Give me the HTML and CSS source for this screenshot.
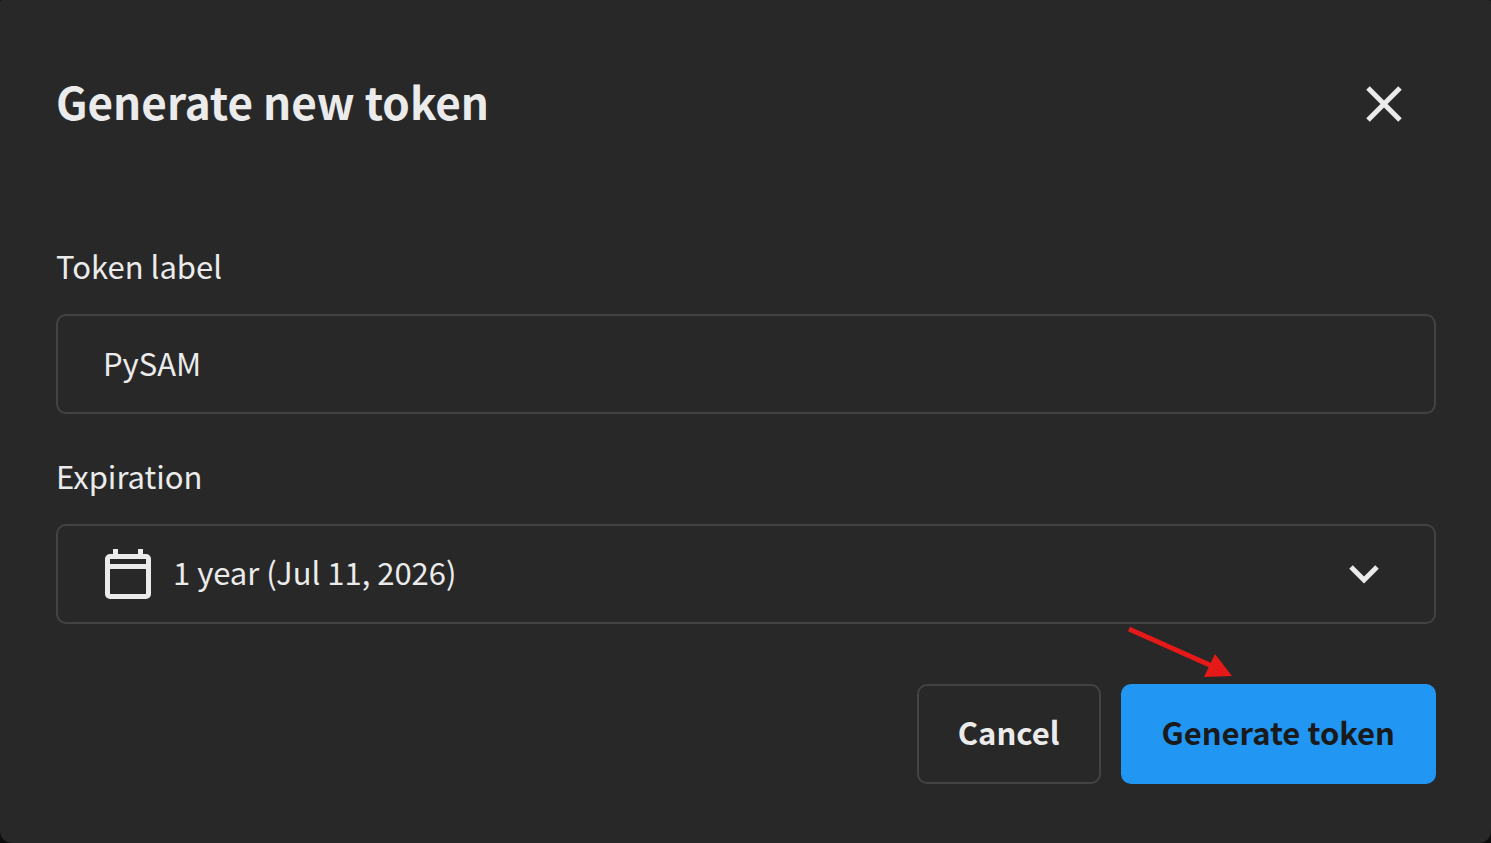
FILE: index.html
```
<!DOCTYPE html>
<html lang="en">
  <head>
    <meta charset="UTF-8">
    <title>Generate new token</title>
    <link rel="stylesheet" href="styles.css">
  </head>
  <body>
  <form class="dialog" role="dialog" aria-labelledby="dialogTitle">
    <div class="header">
      <h1 id="dialogTitle">Generate new token</h1>
      <button type="button" class="close" aria-label="Close">
        <svg width="36" height="36" viewBox="0 0 36 36"><path d="M2 2L34 34M34 2L2 34"/></svg>
      </button>
    </div>

    <label for="tokenLabel">Token label</label>
    <input type="text" id="tokenLabel" class="field" value="PySAM">

    <label for="expiration">Expiration</label>
    <div class="select">
      <select id="expiration" class="field">
        <option>1 year (Jul 11, 2026)</option>
      </select>
      <svg class="calendar" width="46" height="50" viewBox="0 0 46 50">
        <path fill-rule="evenodd" d="M8 0h5v5h20V0h5v5h3a5 5 0 0 1 5 5v35a5 5 0 0 1-5 5H5a5 5 0 0 1-5-5V10a5 5 0 0 1 5-5h3zM5 10v5h36v-5zM5 20v25h36V20z"/>
      </svg>
      <svg class="chevron" width="30" height="20" viewBox="0 0 30 20"><path d="M2 3L15 16L28 3"/></svg>
    </div>

    <div class="buttons">
      <button type="button" class="btn">Cancel</button>
      <div class="submit">
        <button type="submit" class="btn primary">Generate token</button>
        <svg class="arrow" width="106" height="52" viewBox="0 0 106 52">
          <path class="shaft" d="M2 3L85 40"/>
          <path class="head" d="M105 50L88 28L77 51z"/>
        </svg>
      </div>
    </div>
  </form>
  </body>
</html>
```
FILE: styles.css
```
* {box-sizing: border-box;}

body {
  margin: 0;
  background: #0c0c0c;
  color: #ebebeb;
  font-family: "Noto Sans CJK SC", sans-serif;
  font-size: 31px;
  line-height: 44px;
}

.dialog {
  display: flex;
  flex-direction: column;
  min-height: 100vh;
  padding: 52px 55px 56px 56px;
  background: #282828;
  border-radius: 2px 2px 12px 12px;
}

.header {
  display: flex;
  justify-content: space-between;
  align-items: center;
  margin-bottom: 88px;
}

h1 {
  margin: 0;
  padding-bottom: 6px;
  font-size: 44px;
  line-height: 64px;
  font-weight: bold;
}

button, input, select {
  font: inherit;
  color: inherit;
}

.close {
  display: flex;
  align-items: center;
  justify-content: center;
  width: 104px;
  height: 104px;
  padding: 0;
  border: 0;
  background: none;
}

.close path {
  stroke: #ebebeb;
  stroke-width: 5;
}

label {
  margin-bottom: 26px;
}

.field {
  width: 100%;
  height: 100px;
  padding: 0 45px 4px;
  border: 2px solid #434343;
  border-radius: 10px;
  background: #282828;
}

input.field {
  margin-bottom: 40px;
}

.select {
  position: relative;
}

.select .field {
  display: block;
  appearance: none;
  padding-left: 115px;
}

.calendar {
  position: absolute;
  left: 49px;
  top: 25px;
  fill: #ebebeb;
  pointer-events: none;
}

.chevron {
  position: absolute;
  right: 57px;
  top: 40px;
  fill: none;
  stroke: #ebebeb;
  stroke-width: 5;
  pointer-events: none;
}

.buttons {
  display: flex;
  justify-content: flex-end;
  gap: 20px;
  margin-top: 60px;
}

.btn {
  height: 100px;
  padding: 0 39px 4px;
  border: 2px solid #434343;
  border-radius: 10px;
  background: none;
  font-weight: bold;
}

.primary {
  border-color: #2196f3;
  background: #2196f3;
  color: #1a1a1a;
}

.submit {
  position: relative;
}

/* arrow that points at the submit button */
.arrow {
  position: absolute;
  left: 6px;
  bottom: 106px;
  pointer-events: none;
}

.shaft {
  stroke: #e61919;
  stroke-width: 5;
}

.head {
  fill: #e61919;
}
```
